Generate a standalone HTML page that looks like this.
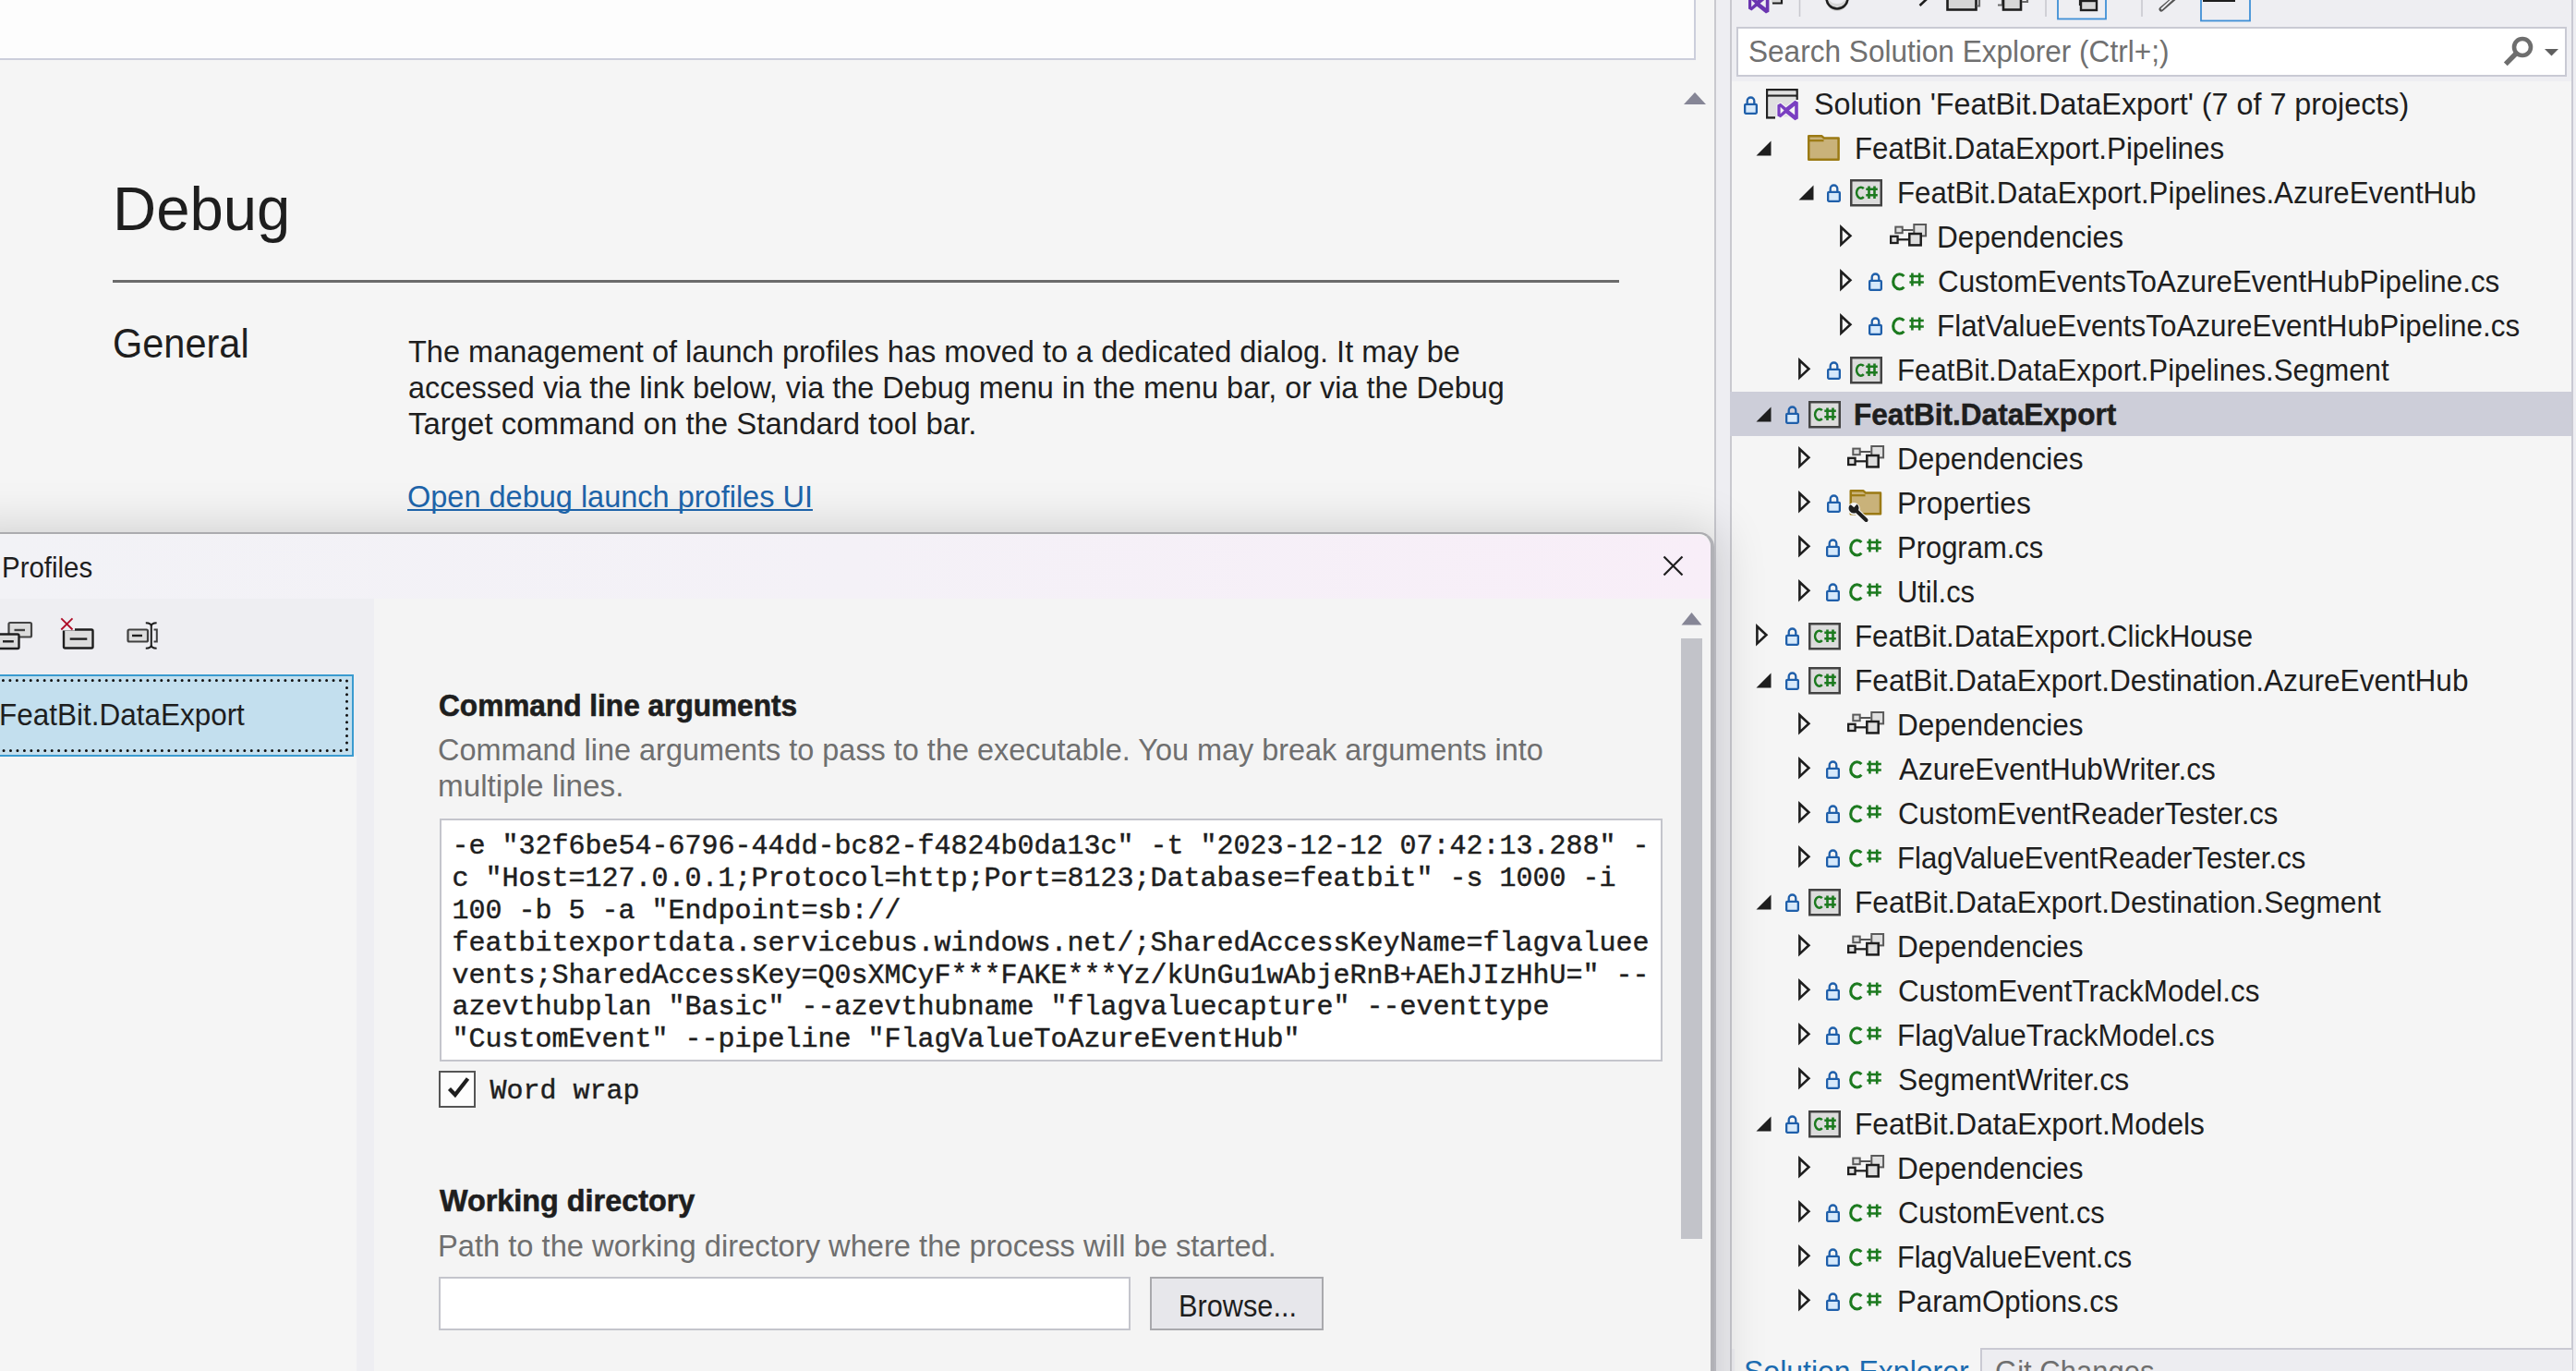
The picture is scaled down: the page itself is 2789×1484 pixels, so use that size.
<!DOCTYPE html>
<html><head><meta charset="utf-8"><title>Debug launch profiles</title><style>
*{margin:0;padding:0;box-sizing:border-box}
html,body{width:2789px;height:1484px;overflow:hidden;background:#f5f5f5;font-family:'Liberation Sans', sans-serif}
.a{position:absolute}
.t{position:absolute;white-space:pre;transform-origin:0 0;font-family:'Liberation Sans', sans-serif}
.m{font-family:'Liberation Mono', monospace;-webkit-text-stroke:0.45px #1e1e1e}
.i{position:absolute;overflow:visible}
</style></head>
<body>
<!-- top white editor strip -->
<div class="a" style="left:0;top:0;width:1836px;height:65px;background:#fdfdfd;border-right:2px solid #cccedb;border-bottom:2px solid #cccedb"></div>
<!-- shadow above dialog -->

<!-- page scroll arrow -->
<svg class="i" style="left:1822px;top:99px" width="26" height="15"><path d="M1 14H25L13 1Z" fill="#868696"/></svg>
<!-- rule -->
<div class="a" style="left:122px;top:302.5px;width:1631px;height:3px;background:#6b6b6b"></div>
<!-- splitter (upper) -->
<div class="a" style="left:1856px;top:0;width:2px;height:1484px;background:#c9c9cf"></div>
<div class="a" style="left:1858px;top:0;width:15px;height:1484px;background:#eeeef2"></div>
<div class="a" style="left:1873px;top:0;width:2px;height:1484px;background:#c9c9cf"></div>
<!-- splitter shadow lower -->


<!-- solution explorer -->
<div class="a" style="left:1875px;top:0;width:914px;height:88px;background:#eeeef2"></div>
<div class="a" style="left:1875px;top:88px;width:909px;height:1372px;background:#f5f5f5"></div>
<div class="a" style="left:2784px;top:0;width:2px;height:1484px;background:#c9c9d3"></div>
<div class="a" style="left:2786px;top:0;width:3px;height:1484px;background:#eeeef2"></div>

<!-- search box -->
<div class="a" style="left:1880px;top:29px;width:899px;height:54px;background:#fff;border:2px solid #c9cad4"></div>
<svg class="i" style="left:2708px;top:38px" width="30" height="36"><circle cx="23" cy="13" r="9" fill="none" stroke="#6e6e6e" stroke-width="4.6"/><path d="M16.5 19.5L4.8 31.3" stroke="#6e6e6e" stroke-width="5.4"/></svg>
<svg class="i" style="left:2755px;top:53px" width="16" height="8"><path d="M0 0H15L7.5 7.5Z" fill="#5f5f5f"/></svg>
<!-- SE toolbar (cut off) -->
<svg class="i" style="left:1890px;top:0" width="560" height="24">
  <g transform="translate(-9.4,-19.8)"><path fill-rule="evenodd" fill="#6a35b0" d="M12.4 17.6L15.8 15.7L21.6 20.4L31.4 12.8L34.8 14.4V32.6L31.4 34.2L21.6 26.6L15.8 31.3L12.4 29.4ZM15.6 19.8V27.2L19.6 23.5Z M31.2 18.6L25 23.5L31.2 28.4Z"/></g>
  <rect x="28" y="-6" width="11" height="9.5" fill="#d8d8d8"/><path d="M29 3.5H39V-2" fill="none" stroke="#1e1e1e" stroke-width="2.2"/>
  <path d="M58.5 0V18" stroke="#c8c8cf" stroke-width="1.6"/>
  <path d="M87 -8A12 12 0 0 0 111 -8V0A12 12 0 0 1 87 0Z" fill="#d6d6d6"/>
  <path d="M87.5 -2A11.2 11.2 0 0 0 110.5 -2" fill="none" stroke="#1e1e1e" stroke-width="2.6"/>
  <path d="M188.5 6L196 -1" stroke="#1e1e1e" stroke-width="2.6"/>
  <rect x="218.5" y="-10" width="31" height="20.5" fill="#d6d6d6" stroke="#1e1e1e" stroke-width="2.6"/>
  <path d="M250 6.5H253V-2" fill="none" stroke="#6a6a6a" stroke-width="2.2"/>
  <path d="M273 5.5H278V-2" fill="none" stroke="#6a6a6a" stroke-width="2.2"/>
  <rect x="279" y="-8" width="19" height="18.5" fill="#d6d6d6" stroke="#1e1e1e" stroke-width="2.6"/>
  <path d="M299 2H305V-2" fill="none" stroke="#6a6a6a" stroke-width="2.2"/>
  <path d="M325 0V18" stroke="#c8c8cf" stroke-width="1.6"/>
  <rect x="338" y="-5" width="52" height="25.5" fill="none" stroke="#3f8fd6" stroke-width="1.8"/>
  <path d="M362 0V5H366" fill="none" stroke="#1e1e1e" stroke-width="2.2"/>
  <rect x="363" y="1" width="17" height="10" fill="#d6d6d6" stroke="#1e1e1e" stroke-width="2.4"/>
  <path d="M429 0V18" stroke="#c8c8cf" stroke-width="1.6"/>
  <path d="M450 10L464 -2" stroke="#555" stroke-width="5" stroke-linecap="round"/>
  <path d="M450.5 9.5L463.5 -2.5" stroke="#eeeef2" stroke-width="1.8" stroke-linecap="round"/>
  <rect x="493" y="-5" width="53" height="27.5" fill="none" stroke="#3f8fd6" stroke-width="1.8"/>
  <path d="M495 0H530" stroke="#1e1e1e" stroke-width="4"/>
</svg>
<!-- selected row -->
<div class="a" style="left:1873px;top:423.8px;width:911px;height:47.8px;background:#cdced9"></div>
<!-- bottom tabs -->
<div class="a" style="left:1875px;top:1460px;width:909px;height:24px;background:#eeeef2"></div>
<div class="a" style="left:1878px;top:1459px;width:266px;height:30px;background:#f5f5f5"></div>
<div class="a" style="left:2143.5px;top:1459px;width:641px;height:30px;background:#ededf1;border:2px solid #c9c9d3;border-right:0"></div>

<!-- dialog -->
<div class="a" style="left:-40px;top:578px;width:1896px;height:1000px;border-radius:0 16px 0 0;box-shadow:0 0 50px 8px rgba(0,0,0,0.15)"></div>
<div class="a" style="left:-20px;top:576px;width:1876px;height:930px;background:#f4f4f4;border:2.5px solid #ababaf;border-right:4px solid #b1b1b6;border-radius:0 16px 0 0"></div>
<div class="a" style="left:0;top:578.5px;width:1852px;height:69.5px;background:linear-gradient(90deg,#f2f2f6,#f4f1f7 50%,#f8eef8);border-radius:0 14px 0 0"></div>
<svg class="i" style="left:1800px;top:601px" width="23" height="23"><path d="M1.5 1.5L21.5 21.5M21.5 1.5L1.5 21.5" stroke="#1e1e1e" stroke-width="2.2"/></svg>
<!-- left panel -->
<div class="a" style="left:0;top:648px;width:405px;height:836px;background:#eeeef2"></div>
<div class="a" style="left:0;top:818px;width:386px;height:666px;background:#f5f5f5"></div>
<!-- selected list item -->
<div class="a" style="left:-4px;top:729.5px;width:387px;height:89.5px;background:#c3dfee;border:2px solid #3a9bd0"></div>
<svg class="i" style="left:0;top:734px" width="382" height="82"><path d="M-4 2.5H375.5V78.5H-4" fill="none" stroke="#111" stroke-width="3" stroke-linecap="round" stroke-dasharray="0 7.45"/></svg>
<!-- dialog toolbar icons -->
<svg class="i" style="left:0;top:666px" width="180" height="40">
  <rect x="9.5" y="8" width="24.5" height="15.5" rx="1.5" fill="#dcdcdc" stroke="#444" stroke-width="2.2"/>
  <path d="M15.5 16H27" stroke="#404040" stroke-width="2.4"/>
  <rect x="-3" y="20.5" width="23.5" height="15.5" rx="1.5" fill="#dcdcdc" stroke="#1e1e1e" stroke-width="2.4"/>
  <path d="M3 28.3H14.8" stroke="#1e1e1e" stroke-width="2.4"/>
  <rect x="69" y="15.5" width="31.5" height="20" rx="1.5" fill="#dcdcdc" stroke="#1e1e1e" stroke-width="2.4"/>
  <path d="M67 14L81 14" stroke="#eeeef2" stroke-width="5"/>
  <path d="M75.7 25.6H94.3" stroke="#1e1e1e" stroke-width="2.4"/>
  <path d="M66.3 3.3L78.5 15.5M78.5 3.3L66.3 15.5" stroke="#b0102a" stroke-width="1.9"/>
  <rect x="138.5" y="15.5" width="21.5" height="13" rx="1.5" fill="#dcdcdc" stroke="#404040" stroke-width="2.2"/>
  <path d="M143 22H154" stroke="#1e1e1e" stroke-width="2.4"/>
  <path d="M166.5 15.5H169.8V28.5H166.5" fill="none" stroke="#404040" stroke-width="2"/>
  <path d="M163.8 9V35M157.8 8.3Q163.8 8.3 163.8 12Q163.8 8.3 169.6 8.3M157.8 35.7Q163.8 35.7 163.8 32Q163.8 35.7 169.6 35.7" fill="none" stroke="#1e1e1e" stroke-width="2"/>
</svg>
<!-- dialog scrollbar -->
<svg class="i" style="left:1820px;top:662px" width="23" height="15"><path d="M0.5 14.5H22.5L11.5 1Z" fill="#868696"/></svg>
<div class="a" style="left:1820px;top:691px;width:23px;height:650px;background:#c2c3c9"></div>
<!-- command line textbox -->
<div class="a" style="left:476px;top:885.5px;width:1324px;height:263px;background:#fff;border:2px solid #c4c5cc"></div>
<!-- checkbox -->
<div class="a" style="left:475px;top:1159px;width:40px;height:40px;background:#fdfdfd;border:2.2px solid #555"></div>
<svg class="i" style="left:484px;top:1165px" width="26" height="24"><path d="M2.5 13.5L8.8 20L22.5 2.5" fill="none" stroke="#1e1e1e" stroke-width="4.2"/></svg>
<!-- working directory textbox + browse -->
<div class="a" style="left:475px;top:1382px;width:749px;height:58px;background:#fff;border:2px solid #c4c5cc"></div>
<div class="a" style="left:1245px;top:1382px;width:188px;height:58px;background:#e7e7eb;border:2px solid #a9a9ad"></div>
<!-- bottom tab text placeholders (cut off) -->

<svg class="i" style="left:1887.80px;top:103.60px" width="15" height="20" viewBox="0 0 15 20"><path d="M3.7 8.8V5.3a3.8 3.8 0 0 1 7.6 0v3.5" fill="none" stroke="#1f5faa" stroke-width="2.3"/><rect x="1.15" y="8.8" width="12.7" height="10" rx="1" fill="#d6e9fb" stroke="#1f5faa" stroke-width="2.3"/></svg><svg class="i" style="left:1912.40px;top:95.60px" width="36" height="35" viewBox="0 0 36 35"><path d="M1.2 31.4V1.2H33.6V12" fill="#e0e0e0" stroke="#222" stroke-width="2.4"/><rect x="2.4" y="2.4" width="30" height="5.2" fill="#e0e0e0"/><path d="M1.2 7.6H33.6" stroke="#222" stroke-width="2.2"/><rect x="2.4" y="8.8" width="30" height="21.5" fill="#e0e0e0"/><path d="M0 31.4H10" stroke="#222" stroke-width="2.4"/><path d="M12.4 17.6L15.8 15.7L21.6 20.4L31.4 12.8L34.8 14.4V32.6L31.4 34.2L21.6 26.6L15.8 31.3L12.4 29.4Z" fill="#f5f5f5" stroke="#f5f5f5" stroke-width="2"/><path fill-rule="evenodd" fill="#7a3fc1" d="M12.4 17.6L15.8 15.7L21.6 20.4L31.4 12.8L34.8 14.4V32.6L31.4 34.2L21.6 26.6L15.8 31.3L12.4 29.4ZM15.6 19.8V27.2L19.6 23.5Z M31.2 18.6L25 23.5L31.2 28.4Z"/></svg><svg class="i" style="left:1901.00px;top:152.10px" width="17" height="17" viewBox="0 0 17 17"><path d="M0.5 16.5H16.5V0.5Z" fill="#1e1e1e"/></svg><svg class="i" style="left:1957.30px;top:145.90px" width="36" height="28" viewBox="0 0 36 28"><path d="M1.25 26.7V1.3H15.5L18 3.6H33.6V26.7Z" fill="#c9b27a" stroke="#9b7a14" stroke-width="2.5" stroke-linejoin="round"/><path d="M1.25 6.2H17.5" stroke="#9b7a14" stroke-width="2.2"/></svg><svg class="i" style="left:1946.50px;top:200.10px" width="17" height="17" viewBox="0 0 17 17"><path d="M0.5 16.5H16.5V0.5Z" fill="#1e1e1e"/></svg><svg class="i" style="left:1978.10px;top:199.00px" width="15" height="20" viewBox="0 0 15 20"><path d="M3.7 8.8V5.3a3.8 3.8 0 0 1 7.6 0v3.5" fill="none" stroke="#1f5faa" stroke-width="2.3"/><rect x="1.15" y="8.8" width="12.7" height="10" rx="1" fill="#d6e9fb" stroke="#1f5faa" stroke-width="2.3"/></svg><svg class="i" style="left:2003.00px;top:194.00px" width="36" height="30" viewBox="0 0 36 30"><rect x="1.25" y="1.25" width="32.5" height="27" fill="#dcdcdc" stroke="#434343" stroke-width="2.5"/><path d="M14.8 10.2A4.6 6 0 1 0 14.8 19.2" fill="none" stroke="#1c7a1f" stroke-width="2.6"/><path d="M20.5 7.5V21M26.5 7.5V21M17.3 10.8H29.8M17.3 17.3H29.8" stroke="#1c7a1f" stroke-width="2.6"/></svg><svg class="i" style="left:1992.00px;top:243.10px" width="14" height="25" viewBox="0 0 14 25"><path d="M1.4 3.0L11.4 12.3L1.4 21.6Z" fill="none" stroke="#1e1e1e" stroke-width="2.6" stroke-linejoin="miter"/></svg><svg class="i" style="left:2045.50px;top:242.00px" width="41" height="26" viewBox="0 0 41 26"><path d="M14 7H25.5" stroke="#555" stroke-width="2"/><rect x="6.3" y="3.6" width="7.4" height="6.6" fill="#e0e0e0" stroke="#5a5a5a" stroke-width="2"/><rect x="26.3" y="1" width="12.8" height="12.4" fill="#e0e0e0" stroke="#5a5a5a" stroke-width="2"/><path d="M9 17.3H20.5" stroke="#1e1e1e" stroke-width="2.2"/><rect x="1.15" y="13.8" width="7.4" height="7.2" fill="#e0e0e0" stroke="#1e1e1e" stroke-width="2.3"/><rect x="21.3" y="11" width="12.4" height="12.4" fill="#dedede" stroke="#1e1e1e" stroke-width="2.5"/></svg><svg class="i" style="left:1992.00px;top:291.10px" width="14" height="25" viewBox="0 0 14 25"><path d="M1.4 3.0L11.4 12.3L1.4 21.6Z" fill="none" stroke="#1e1e1e" stroke-width="2.6" stroke-linejoin="miter"/></svg><svg class="i" style="left:2022.80px;top:295.00px" width="15" height="20" viewBox="0 0 15 20"><path d="M3.7 8.8V5.3a3.8 3.8 0 0 1 7.6 0v3.5" fill="none" stroke="#1f5faa" stroke-width="2.3"/><rect x="1.15" y="8.8" width="12.7" height="10" rx="1" fill="#d6e9fb" stroke="#1f5faa" stroke-width="2.3"/></svg><svg class="i" style="left:2047.80px;top:295.20px" width="36" height="21" viewBox="0 0 36 21"><path d="M13.4 4.1A6.9 8.1 0 1 0 13.4 15.7" fill="none" stroke="#1c7a1f" stroke-width="3.1"/><path d="M22.4 0.5V14.5M30.2 0.5V14.5M19.4 4H34.8M19.4 10.5H34.8" stroke="#1c7a1f" stroke-width="2.6"/></svg><svg class="i" style="left:1992.00px;top:339.10px" width="14" height="25" viewBox="0 0 14 25"><path d="M1.4 3.0L11.4 12.3L1.4 21.6Z" fill="none" stroke="#1e1e1e" stroke-width="2.6" stroke-linejoin="miter"/></svg><svg class="i" style="left:2022.80px;top:343.00px" width="15" height="20" viewBox="0 0 15 20"><path d="M3.7 8.8V5.3a3.8 3.8 0 0 1 7.6 0v3.5" fill="none" stroke="#1f5faa" stroke-width="2.3"/><rect x="1.15" y="8.8" width="12.7" height="10" rx="1" fill="#d6e9fb" stroke="#1f5faa" stroke-width="2.3"/></svg><svg class="i" style="left:2047.80px;top:343.20px" width="36" height="21" viewBox="0 0 36 21"><path d="M13.4 4.1A6.9 8.1 0 1 0 13.4 15.7" fill="none" stroke="#1c7a1f" stroke-width="3.1"/><path d="M22.4 0.5V14.5M30.2 0.5V14.5M19.4 4H34.8M19.4 10.5H34.8" stroke="#1c7a1f" stroke-width="2.6"/></svg><svg class="i" style="left:1946.50px;top:387.10px" width="14" height="25" viewBox="0 0 14 25"><path d="M1.4 3.0L11.4 12.3L1.4 21.6Z" fill="none" stroke="#1e1e1e" stroke-width="2.6" stroke-linejoin="miter"/></svg><svg class="i" style="left:1978.10px;top:391.00px" width="15" height="20" viewBox="0 0 15 20"><path d="M3.7 8.8V5.3a3.8 3.8 0 0 1 7.6 0v3.5" fill="none" stroke="#1f5faa" stroke-width="2.3"/><rect x="1.15" y="8.8" width="12.7" height="10" rx="1" fill="#d6e9fb" stroke="#1f5faa" stroke-width="2.3"/></svg><svg class="i" style="left:2003.00px;top:386.00px" width="36" height="30" viewBox="0 0 36 30"><rect x="1.25" y="1.25" width="32.5" height="27" fill="#dcdcdc" stroke="#434343" stroke-width="2.5"/><path d="M14.8 10.2A4.6 6 0 1 0 14.8 19.2" fill="none" stroke="#1c7a1f" stroke-width="2.6"/><path d="M20.5 7.5V21M26.5 7.5V21M17.3 10.8H29.8M17.3 17.3H29.8" stroke="#1c7a1f" stroke-width="2.6"/></svg><svg class="i" style="left:1901.00px;top:440.10px" width="17" height="17" viewBox="0 0 17 17"><path d="M0.5 16.5H16.5V0.5Z" fill="#1e1e1e"/></svg><svg class="i" style="left:1932.60px;top:439.00px" width="15" height="20" viewBox="0 0 15 20"><path d="M3.7 8.8V5.3a3.8 3.8 0 0 1 7.6 0v3.5" fill="none" stroke="#1f5faa" stroke-width="2.3"/><rect x="1.15" y="8.8" width="12.7" height="10" rx="1" fill="#d6e9fb" stroke="#1f5faa" stroke-width="2.3"/></svg><svg class="i" style="left:1957.50px;top:434.00px" width="36" height="30" viewBox="0 0 36 30"><rect x="1.25" y="1.25" width="32.5" height="27" fill="#dcdcdc" stroke="#434343" stroke-width="2.5"/><path d="M14.8 10.2A4.6 6 0 1 0 14.8 19.2" fill="none" stroke="#1c7a1f" stroke-width="2.6"/><path d="M20.5 7.5V21M26.5 7.5V21M17.3 10.8H29.8M17.3 17.3H29.8" stroke="#1c7a1f" stroke-width="2.6"/></svg><svg class="i" style="left:1946.50px;top:483.10px" width="14" height="25" viewBox="0 0 14 25"><path d="M1.4 3.0L11.4 12.3L1.4 21.6Z" fill="none" stroke="#1e1e1e" stroke-width="2.6" stroke-linejoin="miter"/></svg><svg class="i" style="left:2000.00px;top:482.00px" width="41" height="26" viewBox="0 0 41 26"><path d="M14 7H25.5" stroke="#555" stroke-width="2"/><rect x="6.3" y="3.6" width="7.4" height="6.6" fill="#e0e0e0" stroke="#5a5a5a" stroke-width="2"/><rect x="26.3" y="1" width="12.8" height="12.4" fill="#e0e0e0" stroke="#5a5a5a" stroke-width="2"/><path d="M9 17.3H20.5" stroke="#1e1e1e" stroke-width="2.2"/><rect x="1.15" y="13.8" width="7.4" height="7.2" fill="#e0e0e0" stroke="#1e1e1e" stroke-width="2.3"/><rect x="21.3" y="11" width="12.4" height="12.4" fill="#dedede" stroke="#1e1e1e" stroke-width="2.5"/></svg><svg class="i" style="left:1946.50px;top:531.10px" width="14" height="25" viewBox="0 0 14 25"><path d="M1.4 3.0L11.4 12.3L1.4 21.6Z" fill="none" stroke="#1e1e1e" stroke-width="2.6" stroke-linejoin="miter"/></svg><svg class="i" style="left:1977.50px;top:535.00px" width="15" height="20" viewBox="0 0 15 20"><path d="M3.7 8.8V5.3a3.8 3.8 0 0 1 7.6 0v3.5" fill="none" stroke="#1f5faa" stroke-width="2.3"/><rect x="1.15" y="8.8" width="12.7" height="10" rx="1" fill="#d6e9fb" stroke="#1f5faa" stroke-width="2.3"/></svg><svg class="i" style="left:2000.30px;top:529.80px" width="38" height="35" viewBox="0 0 38 35"><path d="M3.75 26.2V1.3H17.5L20 3.6H36V26.2Z" fill="#c9b27a" stroke="#9b7a14" stroke-width="2.5" stroke-linejoin="round"/><path d="M3.75 6.2H19.5" stroke="#9b7a14" stroke-width="2.2"/><path d="M9 22.5L20.5 33.5" stroke="#f5f5f5" stroke-width="7"/><circle cx="7.2" cy="20.6" r="6.6" fill="#f5f5f5"/><path d="M9.5 22.5L20.5 33" stroke="#1e1e1e" stroke-width="4" stroke-linecap="round"/><path d="M2.2 17.5A5.5 5.5 0 1 0 10.5 15.8L7.3 19.2L3.8 16.2Z" fill="#1e1e1e"/></svg><svg class="i" style="left:1946.50px;top:579.10px" width="14" height="25" viewBox="0 0 14 25"><path d="M1.4 3.0L11.4 12.3L1.4 21.6Z" fill="none" stroke="#1e1e1e" stroke-width="2.6" stroke-linejoin="miter"/></svg><svg class="i" style="left:1977.30px;top:583.00px" width="15" height="20" viewBox="0 0 15 20"><path d="M3.7 8.8V5.3a3.8 3.8 0 0 1 7.6 0v3.5" fill="none" stroke="#1f5faa" stroke-width="2.3"/><rect x="1.15" y="8.8" width="12.7" height="10" rx="1" fill="#d6e9fb" stroke="#1f5faa" stroke-width="2.3"/></svg><svg class="i" style="left:2002.30px;top:583.20px" width="36" height="21" viewBox="0 0 36 21"><path d="M13.4 4.1A6.9 8.1 0 1 0 13.4 15.7" fill="none" stroke="#1c7a1f" stroke-width="3.1"/><path d="M22.4 0.5V14.5M30.2 0.5V14.5M19.4 4H34.8M19.4 10.5H34.8" stroke="#1c7a1f" stroke-width="2.6"/></svg><svg class="i" style="left:1946.50px;top:627.10px" width="14" height="25" viewBox="0 0 14 25"><path d="M1.4 3.0L11.4 12.3L1.4 21.6Z" fill="none" stroke="#1e1e1e" stroke-width="2.6" stroke-linejoin="miter"/></svg><svg class="i" style="left:1977.30px;top:631.00px" width="15" height="20" viewBox="0 0 15 20"><path d="M3.7 8.8V5.3a3.8 3.8 0 0 1 7.6 0v3.5" fill="none" stroke="#1f5faa" stroke-width="2.3"/><rect x="1.15" y="8.8" width="12.7" height="10" rx="1" fill="#d6e9fb" stroke="#1f5faa" stroke-width="2.3"/></svg><svg class="i" style="left:2002.30px;top:631.20px" width="36" height="21" viewBox="0 0 36 21"><path d="M13.4 4.1A6.9 8.1 0 1 0 13.4 15.7" fill="none" stroke="#1c7a1f" stroke-width="3.1"/><path d="M22.4 0.5V14.5M30.2 0.5V14.5M19.4 4H34.8M19.4 10.5H34.8" stroke="#1c7a1f" stroke-width="2.6"/></svg><svg class="i" style="left:1901.00px;top:675.10px" width="14" height="25" viewBox="0 0 14 25"><path d="M1.4 3.0L11.4 12.3L1.4 21.6Z" fill="none" stroke="#1e1e1e" stroke-width="2.6" stroke-linejoin="miter"/></svg><svg class="i" style="left:1932.60px;top:679.00px" width="15" height="20" viewBox="0 0 15 20"><path d="M3.7 8.8V5.3a3.8 3.8 0 0 1 7.6 0v3.5" fill="none" stroke="#1f5faa" stroke-width="2.3"/><rect x="1.15" y="8.8" width="12.7" height="10" rx="1" fill="#d6e9fb" stroke="#1f5faa" stroke-width="2.3"/></svg><svg class="i" style="left:1957.50px;top:674.00px" width="36" height="30" viewBox="0 0 36 30"><rect x="1.25" y="1.25" width="32.5" height="27" fill="#dcdcdc" stroke="#434343" stroke-width="2.5"/><path d="M14.8 10.2A4.6 6 0 1 0 14.8 19.2" fill="none" stroke="#1c7a1f" stroke-width="2.6"/><path d="M20.5 7.5V21M26.5 7.5V21M17.3 10.8H29.8M17.3 17.3H29.8" stroke="#1c7a1f" stroke-width="2.6"/></svg><svg class="i" style="left:1901.00px;top:728.10px" width="17" height="17" viewBox="0 0 17 17"><path d="M0.5 16.5H16.5V0.5Z" fill="#1e1e1e"/></svg><svg class="i" style="left:1932.60px;top:727.00px" width="15" height="20" viewBox="0 0 15 20"><path d="M3.7 8.8V5.3a3.8 3.8 0 0 1 7.6 0v3.5" fill="none" stroke="#1f5faa" stroke-width="2.3"/><rect x="1.15" y="8.8" width="12.7" height="10" rx="1" fill="#d6e9fb" stroke="#1f5faa" stroke-width="2.3"/></svg><svg class="i" style="left:1957.50px;top:722.00px" width="36" height="30" viewBox="0 0 36 30"><rect x="1.25" y="1.25" width="32.5" height="27" fill="#dcdcdc" stroke="#434343" stroke-width="2.5"/><path d="M14.8 10.2A4.6 6 0 1 0 14.8 19.2" fill="none" stroke="#1c7a1f" stroke-width="2.6"/><path d="M20.5 7.5V21M26.5 7.5V21M17.3 10.8H29.8M17.3 17.3H29.8" stroke="#1c7a1f" stroke-width="2.6"/></svg><svg class="i" style="left:1946.50px;top:771.10px" width="14" height="25" viewBox="0 0 14 25"><path d="M1.4 3.0L11.4 12.3L1.4 21.6Z" fill="none" stroke="#1e1e1e" stroke-width="2.6" stroke-linejoin="miter"/></svg><svg class="i" style="left:2000.00px;top:770.00px" width="41" height="26" viewBox="0 0 41 26"><path d="M14 7H25.5" stroke="#555" stroke-width="2"/><rect x="6.3" y="3.6" width="7.4" height="6.6" fill="#e0e0e0" stroke="#5a5a5a" stroke-width="2"/><rect x="26.3" y="1" width="12.8" height="12.4" fill="#e0e0e0" stroke="#5a5a5a" stroke-width="2"/><path d="M9 17.3H20.5" stroke="#1e1e1e" stroke-width="2.2"/><rect x="1.15" y="13.8" width="7.4" height="7.2" fill="#e0e0e0" stroke="#1e1e1e" stroke-width="2.3"/><rect x="21.3" y="11" width="12.4" height="12.4" fill="#dedede" stroke="#1e1e1e" stroke-width="2.5"/></svg><svg class="i" style="left:1946.50px;top:819.10px" width="14" height="25" viewBox="0 0 14 25"><path d="M1.4 3.0L11.4 12.3L1.4 21.6Z" fill="none" stroke="#1e1e1e" stroke-width="2.6" stroke-linejoin="miter"/></svg><svg class="i" style="left:1977.30px;top:823.00px" width="15" height="20" viewBox="0 0 15 20"><path d="M3.7 8.8V5.3a3.8 3.8 0 0 1 7.6 0v3.5" fill="none" stroke="#1f5faa" stroke-width="2.3"/><rect x="1.15" y="8.8" width="12.7" height="10" rx="1" fill="#d6e9fb" stroke="#1f5faa" stroke-width="2.3"/></svg><svg class="i" style="left:2002.30px;top:823.20px" width="36" height="21" viewBox="0 0 36 21"><path d="M13.4 4.1A6.9 8.1 0 1 0 13.4 15.7" fill="none" stroke="#1c7a1f" stroke-width="3.1"/><path d="M22.4 0.5V14.5M30.2 0.5V14.5M19.4 4H34.8M19.4 10.5H34.8" stroke="#1c7a1f" stroke-width="2.6"/></svg><svg class="i" style="left:1946.50px;top:867.10px" width="14" height="25" viewBox="0 0 14 25"><path d="M1.4 3.0L11.4 12.3L1.4 21.6Z" fill="none" stroke="#1e1e1e" stroke-width="2.6" stroke-linejoin="miter"/></svg><svg class="i" style="left:1977.30px;top:871.00px" width="15" height="20" viewBox="0 0 15 20"><path d="M3.7 8.8V5.3a3.8 3.8 0 0 1 7.6 0v3.5" fill="none" stroke="#1f5faa" stroke-width="2.3"/><rect x="1.15" y="8.8" width="12.7" height="10" rx="1" fill="#d6e9fb" stroke="#1f5faa" stroke-width="2.3"/></svg><svg class="i" style="left:2002.30px;top:871.20px" width="36" height="21" viewBox="0 0 36 21"><path d="M13.4 4.1A6.9 8.1 0 1 0 13.4 15.7" fill="none" stroke="#1c7a1f" stroke-width="3.1"/><path d="M22.4 0.5V14.5M30.2 0.5V14.5M19.4 4H34.8M19.4 10.5H34.8" stroke="#1c7a1f" stroke-width="2.6"/></svg><svg class="i" style="left:1946.50px;top:915.10px" width="14" height="25" viewBox="0 0 14 25"><path d="M1.4 3.0L11.4 12.3L1.4 21.6Z" fill="none" stroke="#1e1e1e" stroke-width="2.6" stroke-linejoin="miter"/></svg><svg class="i" style="left:1977.30px;top:919.00px" width="15" height="20" viewBox="0 0 15 20"><path d="M3.7 8.8V5.3a3.8 3.8 0 0 1 7.6 0v3.5" fill="none" stroke="#1f5faa" stroke-width="2.3"/><rect x="1.15" y="8.8" width="12.7" height="10" rx="1" fill="#d6e9fb" stroke="#1f5faa" stroke-width="2.3"/></svg><svg class="i" style="left:2002.30px;top:919.20px" width="36" height="21" viewBox="0 0 36 21"><path d="M13.4 4.1A6.9 8.1 0 1 0 13.4 15.7" fill="none" stroke="#1c7a1f" stroke-width="3.1"/><path d="M22.4 0.5V14.5M30.2 0.5V14.5M19.4 4H34.8M19.4 10.5H34.8" stroke="#1c7a1f" stroke-width="2.6"/></svg><svg class="i" style="left:1901.00px;top:968.10px" width="17" height="17" viewBox="0 0 17 17"><path d="M0.5 16.5H16.5V0.5Z" fill="#1e1e1e"/></svg><svg class="i" style="left:1932.60px;top:967.00px" width="15" height="20" viewBox="0 0 15 20"><path d="M3.7 8.8V5.3a3.8 3.8 0 0 1 7.6 0v3.5" fill="none" stroke="#1f5faa" stroke-width="2.3"/><rect x="1.15" y="8.8" width="12.7" height="10" rx="1" fill="#d6e9fb" stroke="#1f5faa" stroke-width="2.3"/></svg><svg class="i" style="left:1957.50px;top:962.00px" width="36" height="30" viewBox="0 0 36 30"><rect x="1.25" y="1.25" width="32.5" height="27" fill="#dcdcdc" stroke="#434343" stroke-width="2.5"/><path d="M14.8 10.2A4.6 6 0 1 0 14.8 19.2" fill="none" stroke="#1c7a1f" stroke-width="2.6"/><path d="M20.5 7.5V21M26.5 7.5V21M17.3 10.8H29.8M17.3 17.3H29.8" stroke="#1c7a1f" stroke-width="2.6"/></svg><svg class="i" style="left:1946.50px;top:1011.10px" width="14" height="25" viewBox="0 0 14 25"><path d="M1.4 3.0L11.4 12.3L1.4 21.6Z" fill="none" stroke="#1e1e1e" stroke-width="2.6" stroke-linejoin="miter"/></svg><svg class="i" style="left:2000.00px;top:1010.00px" width="41" height="26" viewBox="0 0 41 26"><path d="M14 7H25.5" stroke="#555" stroke-width="2"/><rect x="6.3" y="3.6" width="7.4" height="6.6" fill="#e0e0e0" stroke="#5a5a5a" stroke-width="2"/><rect x="26.3" y="1" width="12.8" height="12.4" fill="#e0e0e0" stroke="#5a5a5a" stroke-width="2"/><path d="M9 17.3H20.5" stroke="#1e1e1e" stroke-width="2.2"/><rect x="1.15" y="13.8" width="7.4" height="7.2" fill="#e0e0e0" stroke="#1e1e1e" stroke-width="2.3"/><rect x="21.3" y="11" width="12.4" height="12.4" fill="#dedede" stroke="#1e1e1e" stroke-width="2.5"/></svg><svg class="i" style="left:1946.50px;top:1059.10px" width="14" height="25" viewBox="0 0 14 25"><path d="M1.4 3.0L11.4 12.3L1.4 21.6Z" fill="none" stroke="#1e1e1e" stroke-width="2.6" stroke-linejoin="miter"/></svg><svg class="i" style="left:1977.30px;top:1063.00px" width="15" height="20" viewBox="0 0 15 20"><path d="M3.7 8.8V5.3a3.8 3.8 0 0 1 7.6 0v3.5" fill="none" stroke="#1f5faa" stroke-width="2.3"/><rect x="1.15" y="8.8" width="12.7" height="10" rx="1" fill="#d6e9fb" stroke="#1f5faa" stroke-width="2.3"/></svg><svg class="i" style="left:2002.30px;top:1063.20px" width="36" height="21" viewBox="0 0 36 21"><path d="M13.4 4.1A6.9 8.1 0 1 0 13.4 15.7" fill="none" stroke="#1c7a1f" stroke-width="3.1"/><path d="M22.4 0.5V14.5M30.2 0.5V14.5M19.4 4H34.8M19.4 10.5H34.8" stroke="#1c7a1f" stroke-width="2.6"/></svg><svg class="i" style="left:1946.50px;top:1107.10px" width="14" height="25" viewBox="0 0 14 25"><path d="M1.4 3.0L11.4 12.3L1.4 21.6Z" fill="none" stroke="#1e1e1e" stroke-width="2.6" stroke-linejoin="miter"/></svg><svg class="i" style="left:1977.30px;top:1111.00px" width="15" height="20" viewBox="0 0 15 20"><path d="M3.7 8.8V5.3a3.8 3.8 0 0 1 7.6 0v3.5" fill="none" stroke="#1f5faa" stroke-width="2.3"/><rect x="1.15" y="8.8" width="12.7" height="10" rx="1" fill="#d6e9fb" stroke="#1f5faa" stroke-width="2.3"/></svg><svg class="i" style="left:2002.30px;top:1111.20px" width="36" height="21" viewBox="0 0 36 21"><path d="M13.4 4.1A6.9 8.1 0 1 0 13.4 15.7" fill="none" stroke="#1c7a1f" stroke-width="3.1"/><path d="M22.4 0.5V14.5M30.2 0.5V14.5M19.4 4H34.8M19.4 10.5H34.8" stroke="#1c7a1f" stroke-width="2.6"/></svg><svg class="i" style="left:1946.50px;top:1155.10px" width="14" height="25" viewBox="0 0 14 25"><path d="M1.4 3.0L11.4 12.3L1.4 21.6Z" fill="none" stroke="#1e1e1e" stroke-width="2.6" stroke-linejoin="miter"/></svg><svg class="i" style="left:1977.30px;top:1159.00px" width="15" height="20" viewBox="0 0 15 20"><path d="M3.7 8.8V5.3a3.8 3.8 0 0 1 7.6 0v3.5" fill="none" stroke="#1f5faa" stroke-width="2.3"/><rect x="1.15" y="8.8" width="12.7" height="10" rx="1" fill="#d6e9fb" stroke="#1f5faa" stroke-width="2.3"/></svg><svg class="i" style="left:2002.30px;top:1159.20px" width="36" height="21" viewBox="0 0 36 21"><path d="M13.4 4.1A6.9 8.1 0 1 0 13.4 15.7" fill="none" stroke="#1c7a1f" stroke-width="3.1"/><path d="M22.4 0.5V14.5M30.2 0.5V14.5M19.4 4H34.8M19.4 10.5H34.8" stroke="#1c7a1f" stroke-width="2.6"/></svg><svg class="i" style="left:1901.00px;top:1208.10px" width="17" height="17" viewBox="0 0 17 17"><path d="M0.5 16.5H16.5V0.5Z" fill="#1e1e1e"/></svg><svg class="i" style="left:1932.60px;top:1207.00px" width="15" height="20" viewBox="0 0 15 20"><path d="M3.7 8.8V5.3a3.8 3.8 0 0 1 7.6 0v3.5" fill="none" stroke="#1f5faa" stroke-width="2.3"/><rect x="1.15" y="8.8" width="12.7" height="10" rx="1" fill="#d6e9fb" stroke="#1f5faa" stroke-width="2.3"/></svg><svg class="i" style="left:1957.50px;top:1202.00px" width="36" height="30" viewBox="0 0 36 30"><rect x="1.25" y="1.25" width="32.5" height="27" fill="#dcdcdc" stroke="#434343" stroke-width="2.5"/><path d="M14.8 10.2A4.6 6 0 1 0 14.8 19.2" fill="none" stroke="#1c7a1f" stroke-width="2.6"/><path d="M20.5 7.5V21M26.5 7.5V21M17.3 10.8H29.8M17.3 17.3H29.8" stroke="#1c7a1f" stroke-width="2.6"/></svg><svg class="i" style="left:1946.50px;top:1251.10px" width="14" height="25" viewBox="0 0 14 25"><path d="M1.4 3.0L11.4 12.3L1.4 21.6Z" fill="none" stroke="#1e1e1e" stroke-width="2.6" stroke-linejoin="miter"/></svg><svg class="i" style="left:2000.00px;top:1250.00px" width="41" height="26" viewBox="0 0 41 26"><path d="M14 7H25.5" stroke="#555" stroke-width="2"/><rect x="6.3" y="3.6" width="7.4" height="6.6" fill="#e0e0e0" stroke="#5a5a5a" stroke-width="2"/><rect x="26.3" y="1" width="12.8" height="12.4" fill="#e0e0e0" stroke="#5a5a5a" stroke-width="2"/><path d="M9 17.3H20.5" stroke="#1e1e1e" stroke-width="2.2"/><rect x="1.15" y="13.8" width="7.4" height="7.2" fill="#e0e0e0" stroke="#1e1e1e" stroke-width="2.3"/><rect x="21.3" y="11" width="12.4" height="12.4" fill="#dedede" stroke="#1e1e1e" stroke-width="2.5"/></svg><svg class="i" style="left:1946.50px;top:1299.10px" width="14" height="25" viewBox="0 0 14 25"><path d="M1.4 3.0L11.4 12.3L1.4 21.6Z" fill="none" stroke="#1e1e1e" stroke-width="2.6" stroke-linejoin="miter"/></svg><svg class="i" style="left:1977.30px;top:1303.00px" width="15" height="20" viewBox="0 0 15 20"><path d="M3.7 8.8V5.3a3.8 3.8 0 0 1 7.6 0v3.5" fill="none" stroke="#1f5faa" stroke-width="2.3"/><rect x="1.15" y="8.8" width="12.7" height="10" rx="1" fill="#d6e9fb" stroke="#1f5faa" stroke-width="2.3"/></svg><svg class="i" style="left:2002.30px;top:1303.20px" width="36" height="21" viewBox="0 0 36 21"><path d="M13.4 4.1A6.9 8.1 0 1 0 13.4 15.7" fill="none" stroke="#1c7a1f" stroke-width="3.1"/><path d="M22.4 0.5V14.5M30.2 0.5V14.5M19.4 4H34.8M19.4 10.5H34.8" stroke="#1c7a1f" stroke-width="2.6"/></svg><svg class="i" style="left:1946.50px;top:1347.10px" width="14" height="25" viewBox="0 0 14 25"><path d="M1.4 3.0L11.4 12.3L1.4 21.6Z" fill="none" stroke="#1e1e1e" stroke-width="2.6" stroke-linejoin="miter"/></svg><svg class="i" style="left:1977.30px;top:1351.00px" width="15" height="20" viewBox="0 0 15 20"><path d="M3.7 8.8V5.3a3.8 3.8 0 0 1 7.6 0v3.5" fill="none" stroke="#1f5faa" stroke-width="2.3"/><rect x="1.15" y="8.8" width="12.7" height="10" rx="1" fill="#d6e9fb" stroke="#1f5faa" stroke-width="2.3"/></svg><svg class="i" style="left:2002.30px;top:1351.20px" width="36" height="21" viewBox="0 0 36 21"><path d="M13.4 4.1A6.9 8.1 0 1 0 13.4 15.7" fill="none" stroke="#1c7a1f" stroke-width="3.1"/><path d="M22.4 0.5V14.5M30.2 0.5V14.5M19.4 4H34.8M19.4 10.5H34.8" stroke="#1c7a1f" stroke-width="2.6"/></svg><svg class="i" style="left:1946.50px;top:1395.10px" width="14" height="25" viewBox="0 0 14 25"><path d="M1.4 3.0L11.4 12.3L1.4 21.6Z" fill="none" stroke="#1e1e1e" stroke-width="2.6" stroke-linejoin="miter"/></svg><svg class="i" style="left:1977.30px;top:1399.00px" width="15" height="20" viewBox="0 0 15 20"><path d="M3.7 8.8V5.3a3.8 3.8 0 0 1 7.6 0v3.5" fill="none" stroke="#1f5faa" stroke-width="2.3"/><rect x="1.15" y="8.8" width="12.7" height="10" rx="1" fill="#d6e9fb" stroke="#1f5faa" stroke-width="2.3"/></svg><svg class="i" style="left:2002.30px;top:1399.20px" width="36" height="21" viewBox="0 0 36 21"><path d="M13.4 4.1A6.9 8.1 0 1 0 13.4 15.7" fill="none" stroke="#1c7a1f" stroke-width="3.1"/><path d="M22.4 0.5V14.5M30.2 0.5V14.5M19.4 4H34.8M19.4 10.5H34.8" stroke="#1c7a1f" stroke-width="2.6"/></svg>
<div class="t" style="left:122.20px;top:192.96px;font-size:66.2px;line-height:66.2px;font-weight:400;color:#1e1e1e;transform:scaleX(0.9866);">Debug</div>
<div class="t" style="left:122.05px;top:349.68px;font-size:44.2px;line-height:44.2px;font-weight:400;color:#1e1e1e;transform:scaleX(0.9392);">General</div>
<div class="t" style="left:442.49px;top:364.99px;font-size:32.5px;line-height:32.5px;font-weight:400;color:#1e1e1e;transform:scaleX(1.0006);">The management of launch profiles has moved to a dedicated dialog. It may be</div>
<div class="t" style="left:441.99px;top:403.79px;font-size:32.5px;line-height:32.5px;font-weight:400;color:#1e1e1e;transform:scaleX(0.9969);">accessed via the link below, via the Debug menu in the menu bar, or via the Debug</div>
<div class="t" style="left:442.49px;top:442.69px;font-size:32.5px;line-height:32.5px;font-weight:400;color:#1e1e1e;transform:scaleX(1.0139);">Target command on the Standard tool bar.</div>
<div class="t" style="left:441.48px;top:521.59px;font-size:32.5px;line-height:32.5px;font-weight:400;color:#1d63a8;transform:scaleX(0.9998);text-decoration:underline;text-decoration-thickness:2px;text-underline-offset:2px;text-decoration-skip-ink:none;">Open debug launch profiles UI</div>
<div class="t" style="left:1.70px;top:598.68px;font-size:30.5px;line-height:30.5px;font-weight:400;color:#1e1e1e;transform:scaleX(0.9658);">Profiles</div>
<div class="t" style="left:-1.46px;top:757.89px;font-size:32.5px;line-height:32.5px;font-weight:400;color:#1e1e1e;transform:scaleX(0.9683);">FeatBit.DataExport</div>
<div class="t" style="left:475.01px;top:747.59px;font-size:32.5px;line-height:32.5px;font-weight:700;color:#1e1e1e;transform:scaleX(0.9724);-webkit-text-stroke:0.6px #1e1e1e;">Command line arguments</div>
<div class="t" style="left:474.48px;top:795.89px;font-size:32.5px;line-height:32.5px;font-weight:400;color:#6f6f6f;transform:scaleX(0.9977);">Command line arguments to pass to the executable. You may break arguments into</div>
<div class="t" style="left:473.92px;top:834.99px;font-size:32.5px;line-height:32.5px;font-weight:400;color:#6f6f6f;transform:scaleX(1.0228);">multiple lines.</div>
<div class="t" style="left:475.50px;top:1283.59px;font-size:32.5px;line-height:32.5px;font-weight:700;color:#1e1e1e;transform:scaleX(0.9956);-webkit-text-stroke:0.6px #1e1e1e;">Working directory</div>
<div class="t" style="left:474.45px;top:1332.59px;font-size:32.5px;line-height:32.5px;font-weight:400;color:#6f6f6f;transform:scaleX(1.0051);">Path to the working directory where the process will be started.</div>
<div class="t" style="left:1276.10px;top:1397.99px;font-size:32.5px;line-height:32.5px;font-weight:400;color:#1e1e1e;transform:scaleX(0.9455);">Browse...</div>
<div class="t" style="left:1892.51px;top:40.39px;font-size:32.5px;line-height:32.5px;font-weight:400;color:#707070;transform:scaleX(0.9716);">Search Solution Explorer (Ctrl+;)</div>
<div class="t" style="left:1887.50px;top:1468.69px;font-size:32.5px;line-height:32.5px;font-weight:400;color:#1a6bb0;transform:scaleX(0.9845);">Solution Explorer</div>
<div class="t" style="left:2159.55px;top:1468.69px;font-size:32.5px;line-height:32.5px;font-weight:400;color:#6f6f6f;transform:scaleX(0.9544);">Git Changes</div>
<div class="t" style="left:1963.69px;top:96.69px;font-size:32.5px;line-height:32.5px;font-weight:400;color:#1e1e1e;transform:scaleX(0.9937);">Solution 'FeatBit.DataExport' (7 of 7 projects)</div>
<div class="t" style="left:2007.56px;top:144.69px;font-size:32.5px;line-height:32.5px;font-weight:400;color:#1e1e1e;transform:scaleX(0.9628);">FeatBit.DataExport.Pipelines</div>
<div class="t" style="left:2053.56px;top:192.69px;font-size:32.5px;line-height:32.5px;font-weight:400;color:#1e1e1e;transform:scaleX(0.9613);">FeatBit.DataExport.Pipelines.AzureEventHub</div>
<div class="t" style="left:2097.03px;top:240.69px;font-size:32.5px;line-height:32.5px;font-weight:400;color:#1e1e1e;transform:scaleX(0.9719);">Dependencies</div>
<div class="t" style="left:2098.03px;top:288.69px;font-size:32.5px;line-height:32.5px;font-weight:400;color:#1e1e1e;transform:scaleX(0.9648);">CustomEventsToAzureEventHubPipeline.cs</div>
<div class="t" style="left:2097.05px;top:336.69px;font-size:32.5px;line-height:32.5px;font-weight:400;color:#1e1e1e;transform:scaleX(0.9660);">FlatValueEventsToAzureEventHubPipeline.cs</div>
<div class="t" style="left:2053.56px;top:384.69px;font-size:32.5px;line-height:32.5px;font-weight:400;color:#1e1e1e;transform:scaleX(0.9604);">FeatBit.DataExport.Pipelines.Segment</div>
<div class="t" style="left:2006.53px;top:432.69px;font-size:32.5px;line-height:32.5px;font-weight:700;color:#1e1e1e;transform:scaleX(0.9716);-webkit-text-stroke:0.5px #1e1e1e;">FeatBit.DataExport</div>
<div class="t" style="left:2053.54px;top:480.69px;font-size:32.5px;line-height:32.5px;font-weight:400;color:#1e1e1e;transform:scaleX(0.9704);">Dependencies</div>
<div class="t" style="left:2053.52px;top:528.69px;font-size:32.5px;line-height:32.5px;font-weight:400;color:#1e1e1e;transform:scaleX(0.9781);">Properties</div>
<div class="t" style="left:2053.58px;top:576.69px;font-size:32.5px;line-height:32.5px;font-weight:400;color:#1e1e1e;transform:scaleX(0.9521);">Program.cs</div>
<div class="t" style="left:2054.07px;top:624.69px;font-size:32.5px;line-height:32.5px;font-weight:400;color:#1e1e1e;transform:scaleX(0.9494);">Util.cs</div>
<div class="t" style="left:2007.56px;top:672.69px;font-size:32.5px;line-height:32.5px;font-weight:400;color:#1e1e1e;transform:scaleX(0.9622);">FeatBit.DataExport.ClickHouse</div>
<div class="t" style="left:2007.53px;top:720.69px;font-size:32.5px;line-height:32.5px;font-weight:400;color:#1e1e1e;transform:scaleX(0.9731);">FeatBit.DataExport.Destination.AzureEventHub</div>
<div class="t" style="left:2053.54px;top:768.69px;font-size:32.5px;line-height:32.5px;font-weight:400;color:#1e1e1e;transform:scaleX(0.9704);">Dependencies</div>
<div class="t" style="left:2056.00px;top:816.69px;font-size:32.5px;line-height:32.5px;font-weight:400;color:#1e1e1e;transform:scaleX(0.9699);">AzureEventHubWriter.cs</div>
<div class="t" style="left:2054.54px;top:864.69px;font-size:32.5px;line-height:32.5px;font-weight:400;color:#1e1e1e;transform:scaleX(0.9570);">CustomEventReaderTester.cs</div>
<div class="t" style="left:2053.57px;top:912.69px;font-size:32.5px;line-height:32.5px;font-weight:400;color:#1e1e1e;transform:scaleX(0.9576);">FlagValueEventReaderTester.cs</div>
<div class="t" style="left:2007.53px;top:960.69px;font-size:32.5px;line-height:32.5px;font-weight:400;color:#1e1e1e;transform:scaleX(0.9735);">FeatBit.DataExport.Destination.Segment</div>
<div class="t" style="left:2053.54px;top:1008.69px;font-size:32.5px;line-height:32.5px;font-weight:400;color:#1e1e1e;transform:scaleX(0.9704);">Dependencies</div>
<div class="t" style="left:2054.53px;top:1056.69px;font-size:32.5px;line-height:32.5px;font-weight:400;color:#1e1e1e;transform:scaleX(0.9661);">CustomEventTrackModel.cs</div>
<div class="t" style="left:2053.54px;top:1104.69px;font-size:32.5px;line-height:32.5px;font-weight:400;color:#1e1e1e;transform:scaleX(0.9707);">FlagValueTrackModel.cs</div>
<div class="t" style="left:2055.01px;top:1152.69px;font-size:32.5px;line-height:32.5px;font-weight:400;color:#1e1e1e;transform:scaleX(0.9774);">SegmentWriter.cs</div>
<div class="t" style="left:2007.52px;top:1200.69px;font-size:32.5px;line-height:32.5px;font-weight:400;color:#1e1e1e;transform:scaleX(0.9758);">FeatBit.DataExport.Models</div>
<div class="t" style="left:2053.54px;top:1248.69px;font-size:32.5px;line-height:32.5px;font-weight:400;color:#1e1e1e;transform:scaleX(0.9704);">Dependencies</div>
<div class="t" style="left:2054.56px;top:1296.69px;font-size:32.5px;line-height:32.5px;font-weight:400;color:#1e1e1e;transform:scaleX(0.9450);">CustomEvent.cs</div>
<div class="t" style="left:2053.60px;top:1344.69px;font-size:32.5px;line-height:32.5px;font-weight:400;color:#1e1e1e;transform:scaleX(0.9464);">FlagValueEvent.cs</div>
<div class="t" style="left:2053.56px;top:1392.69px;font-size:32.5px;line-height:32.5px;font-weight:400;color:#1e1e1e;transform:scaleX(0.9613);">ParamOptions.cs</div>
<div class="t m" style="left:489.40px;top:900.80px;font-size:30.0px;line-height:30.0px;color:#1e1e1e">-e "32f6be54-6796-44dd-bc82-f4824b0da13c" -t "2023-12-12 07:42:13.288" -</div><div class="t m" style="left:489.40px;top:935.73px;font-size:30.0px;line-height:30.0px;color:#1e1e1e">c "Host=127.0.0.1;Protocol=http;Port=8123;Database=featbit" -s 1000 -i</div><div class="t m" style="left:489.40px;top:970.66px;font-size:30.0px;line-height:30.0px;color:#1e1e1e">100 -b 5 -a "Endpoint=sb://</div><div class="t m" style="left:489.40px;top:1005.59px;font-size:30.0px;line-height:30.0px;color:#1e1e1e">featbitexportdata.servicebus.windows.net/;SharedAccessKeyName=flagvaluee</div><div class="t m" style="left:489.40px;top:1040.53px;font-size:30.0px;line-height:30.0px;color:#1e1e1e">vents;SharedAccessKey=Q0sXMCyF***FAKE***Yz/kUnGu1wAbjeRnB+AEhJIzHhU=" --</div><div class="t m" style="left:489.40px;top:1075.46px;font-size:30.0px;line-height:30.0px;color:#1e1e1e">azevthubplan "Basic" --azevthubname "flagvaluecapture" --eventtype</div><div class="t m" style="left:489.40px;top:1110.38px;font-size:30.0px;line-height:30.0px;color:#1e1e1e">"CustomEvent" --pipeline "FlagValueToAzureEventHub"</div><div class="t m" style="left:530.50px;top:1166.31px;font-size:30.0px;line-height:30.0px;color:#1e1e1e">Word wrap</div>
</body></html>
